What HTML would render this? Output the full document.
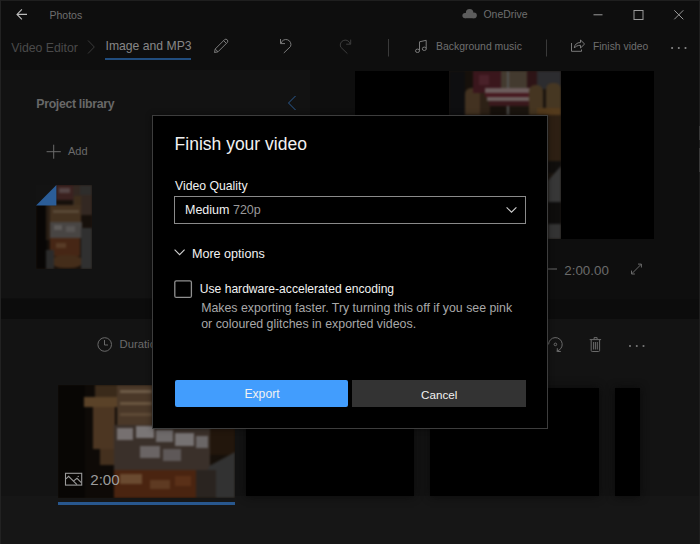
<!DOCTYPE html>
<html><head><meta charset="utf-8">
<style>
*{margin:0;padding:0;box-sizing:border-box}
html,body{width:700px;height:544px;overflow:hidden;background:#0e0e0e;font-family:"Liberation Sans",sans-serif}
.a{position:absolute}
.t{position:absolute;white-space:nowrap;line-height:1}
svg{position:absolute;overflow:visible}
</style></head><body>
<!-- window borders -->
<div class="a" style="left:0;top:0;width:700px;height:1px;background:#1f1f1f"></div>
<div class="a" style="left:0;top:0;width:1px;height:544px;background:#222"></div>
<div class="a" style="left:699px;top:0;width:1px;height:544px;background:#1e1e1e"></div>

<div class="a" style="left:699px;top:126px;width:1px;height:14px;background:#3a3a3a"></div>
<div class="a" style="left:699px;top:148px;width:1px;height:24px;background:#3a3a3a"></div>
<!-- title bar -->
<svg style="left:0;top:0" width="700" height="30">
  <g stroke="#bdbdbd" stroke-width="1.1" fill="none">
    <path d="M17.3 14.4H27 M21.9 9.4L17 14.4L21.9 19.4"/>
  </g>
  <g stroke="#9a9a9a" stroke-width="1" fill="none">
    <path d="M593.5 14.8H602.5"/>
    <rect x="634" y="10.5" width="9" height="9"/>
    <path d="M674.3 10.3L683.3 19.3M683.3 10.3L674.3 19.3"/>
  </g>
  <g fill="#5c5c5c"><circle cx="465" cy="15.6" r="2.6"/><circle cx="469.6" cy="12.9" r="3.8"/><circle cx="474" cy="15.4" r="2.8"/><rect x="465" y="13" width="9" height="5.2"/></g>
</svg>
<div class="t" style="left:49.5px;top:9.5px;font-size:10.5px;color:#6e6e6e">Photos</div>
<div class="t" style="left:483.5px;top:9.8px;font-size:10.45px;color:#6e6e6e">OneDrive</div>

<!-- toolbar -->
<div class="t" style="left:11.2px;top:41.6px;font-size:12.3px;color:#4a4a4a">Video Editor</div>
<svg style="left:0;top:30" width="700" height="34">
  <path d="M88 10.5L94.3 17L88 23.5" stroke="#3a3a3a" stroke-width="1" fill="none"/>
</svg>
<div class="t" style="left:105.5px;top:40.3px;font-size:12.2px;color:#878787">Image and MP3</div>
<div class="a" style="left:105px;top:58px;width:86px;height:2px;background:#214d7e"></div>
<svg style="left:0;top:0" width="700" height="64">
  <g stroke="#7a7a7a" stroke-width="1" fill="none">
    <!-- pencil -->
    <path d="M214.5 52.5L215.2 49L224.6 39.6A2 2 0 0 1 227.4 42.4L218 51.8Z M215.2 49L218 51.8 M223.6 40.6L226.4 43.4"/>
    <!-- undo -->
    <path d="M280.5 39V43.6H285 M281 43.6A5 5 0 1 1 290.5 46.5L283.8 53"/>
  </g>
  <g stroke="#3d3d3d" stroke-width="1" fill="none">
    <!-- redo -->
    <path d="M350.7 39.6V44.2H346.2 M350.2 44.2A5 5 0 1 0 340.7 47.1L347.4 53.6"/>
  </g>
  <rect x="388" y="39" width="1" height="17.5" fill="#3a3a3a"/>
  <rect x="546" y="39.5" width="1" height="17" fill="#3a3a3a"/>
  <g stroke="#7a7a7a" stroke-width="1" fill="none">
    <!-- music -->
    <path d="M419.5 50.5V41.8L426.2 40.3V48.6"/>
    <ellipse cx="417.5" cy="50.8" rx="2" ry="1.7"/>
    <ellipse cx="424.3" cy="48.8" rx="2" ry="1.7"/>
    <!-- share -->
    <path d="M571.5 43V51.3H581.5V49.5"/>
    <path d="M574.3 48C574.5 44.5 577 42.5 580.5 42.5V40L584.6 44L580.5 48V45.3C577.5 45.3 575.5 46.5 574.3 48Z"/>
  </g>
  <g fill="#8a8a8a">
    <circle cx="672.1" cy="48" r="1.05"/><circle cx="678.8" cy="48" r="1.05"/><circle cx="685.5" cy="48" r="1.05"/>
  </g>
</svg>
<div class="t" style="left:436px;top:41.5px;font-size:10.45px;color:#6e6e6e">Background music</div>
<div class="t" style="left:593px;top:41.9px;font-size:10.35px;color:#6e6e6e">Finish video</div>

<!-- left panel -->
<div class="a" style="left:1px;top:70px;width:308.5px;height:228px;background:#121212"></div>
<div class="t" style="left:36.3px;top:98px;font-size:12.3px;letter-spacing:-0.32px;color:#686868;font-weight:bold">Project library</div>
<svg style="left:0;top:0" width="320" height="300">
  <path d="M295.5 96L288.5 103L295.5 110" stroke="#2b5c94" stroke-width="1" fill="none"/>
  <path d="M53.7 144.7V158.7M46.6 151.7H60.8" stroke="#6a6a6a" stroke-width="1" fill="none"/>
</svg>
<div class="t" style="left:68px;top:146px;font-size:11px;color:#6a6a6a">Add</div>
<!-- thumbnail -->
<div class="a" id="thumb" style="left:36px;top:185px;width:56px;height:84px;background:#1c140e;overflow:hidden">
  <div style="position:absolute;left:-4px;top:-4px;width:64px;height:92px;filter:blur(0.9px) brightness(0.8)">
<div class="a" style="left:4px;top:4px;width:11px;height:84px;background:#0a0806;"></div>
<div class="a" style="left:15px;top:4px;width:45px;height:84px;background:#1c140e;"></div>
<div class="a" style="left:14px;top:14px;width:6px;height:45px;background:#34261a;"></div>
<div class="a" style="left:24px;top:4px;width:17px;height:15px;background:#4a2a28;"></div>
<div class="a" style="left:27px;top:7px;width:11px;height:5px;background:#6a5656;"></div>
<div class="a" style="left:41px;top:4px;width:19px;height:30px;background:#40322a;"></div>
<div class="a" style="left:48px;top:4px;width:12px;height:10px;background:#3a3836;"></div>
<div class="a" style="left:42px;top:15px;width:7px;height:36px;background:#4e3a24;"></div>
<div class="a" style="left:18px;top:24px;width:31px;height:17px;background:#553e28;"></div>
<div class="a" style="left:21px;top:29px;width:26px;height:3px;background:#6e5a44;"></div>
<div class="a" style="left:18px;top:41px;width:32px;height:16px;background:#5a5654;"></div>
<div class="a" style="left:22px;top:44px;width:8px;height:5px;background:#767270;"></div>
<div class="a" style="left:34px;top:45px;width:9px;height:6px;background:#6e6a68;"></div>
<div class="a" style="left:18px;top:57px;width:30px;height:18px;background:#58301a;"></div>
<div class="a" style="left:24px;top:62px;width:10px;height:5px;background:#6e4a30;"></div>
<div class="a" style="left:20px;top:74px;width:30px;height:13px;background:#553820;border-radius:40%"></div>
<div class="a" style="left:49px;top:47px;width:11px;height:41px;background:#3c3c3c;"></div>
<div class="a" style="left:14px;top:69px;width:8px;height:19px;background:#363636;"></div>
  </div>
</div>
<svg style="left:0;top:0" width="100" height="300">
  <path d="M36 185H56.4L36 205.6Z" fill="#131313"/>
  <path d="M56.4 185V205.6H36Z" fill="#2b5d98"/>
</svg>

<!-- preview -->
<div class="a" style="left:355px;top:71px;width:299px;height:168px;background:#000"></div>
<div class="a" id="prev" style="left:449px;top:71px;width:112px;height:168px;background:#1a140e;overflow:hidden">
  <div style="position:absolute;left:-4px;top:-4px;width:120px;height:176px;filter:blur(1px) brightness(0.78)">
<div class="a" style="left:4px;top:4px;width:16px;height:168px;background:#121214;"></div>
<div class="a" style="left:20px;top:4px;width:40px;height:168px;background:#1c140e;"></div>
<div class="a" style="left:20px;top:21px;width:15px;height:60px;background:#56402a;border-radius:6px 6px 0 0"></div>
<div class="a" style="left:35px;top:24px;width:10px;height:60px;background:#3a2a1c;"></div>
<div class="a" style="left:28px;top:4px;width:28px;height:22px;background:#4a1c24;"></div>
<div class="a" style="left:34px;top:8px;width:10px;height:10px;background:#5e2a34;"></div>
<div class="a" style="left:56px;top:4px;width:26px;height:18px;background:#564a3c;"></div>
<div class="a" style="left:62px;top:4px;width:2px;height:60px;background:#6a6a6a;"></div>
<div class="a" style="left:82px;top:4px;width:10px;height:20px;background:#3a1a1c;"></div>
<div class="a" style="left:92px;top:4px;width:24px;height:18px;background:#38383c;"></div>
<div class="a" style="left:40px;top:21px;width:46px;height:5px;background:#8a7676;"></div>
<div class="a" style="left:40px;top:26px;width:46px;height:4px;background:#5a2028;"></div>
<div class="a" style="left:42px;top:30px;width:44px;height:4px;background:#8a7a78;"></div>
<div class="a" style="left:44px;top:34px;width:40px;height:5px;background:#4a2024;"></div>
<div class="a" style="left:84px;top:18px;width:14px;height:40px;background:#58442a;border-radius:6px 6px 0 0"></div>
<div class="a" style="left:101px;top:16px;width:15px;height:42px;background:#5a462c;border-radius:6px 6px 0 0"></div>
<div class="a" style="left:92px;top:41px;width:24px;height:8px;background:#6a4a24;"></div>
<div class="a" style="left:20px;top:48px;width:96px;height:20px;background:#2a1e14;"></div>
<div class="a" style="left:103px;top:48px;width:13px;height:46px;background:#3a2818;"></div>
<div class="a" style="left:103px;top:94px;width:13px;height:12px;background:#141210;"></div>
<div class="a" style="left:103px;top:99px;width:13px;height:36px;background:#464646;clip-path:polygon(100% 0,100% 100%,0 100%,0 40%)"></div>
<div class="a" style="left:103px;top:135px;width:13px;height:22px;background:#121110;"></div>
<div class="a" style="left:103px;top:157px;width:13px;height:15px;background:#424242;"></div>
  </div>
</div>
<div class="a" style="left:547px;top:268px;width:10px;height:2px;background:#3a3a3a"></div>
<div class="t" style="left:564.3px;top:263.8px;font-size:13.35px;color:#6a6a6a">2:00.00</div>
<svg style="left:0;top:0" width="700" height="300">
  <path d="M631.5 274L641.4 264.1M631.5 274V270.6M631.5 274H634.9M641.4 264.1H638M641.4 264.1V267.5" stroke="#6a6a6a" stroke-width="1" fill="none"/>
</svg>

<!-- band -->
<div class="a" style="left:1px;top:299px;width:698px;height:20px;background:#0c0c0c"></div>
<!-- storyboard -->
<div class="a" style="left:1px;top:319px;width:698px;height:225px;background:#131313"></div>
<div class="a" style="left:1px;top:496px;width:698px;height:48px;background:#161616"></div>
<svg style="left:0;top:0" width="700" height="544">
  <circle cx="104.7" cy="344.5" r="6.8" stroke="#6a6a6a" stroke-width="1" fill="none"/>
  <path d="M104.5 340V345H108" stroke="#6a6a6a" stroke-width="1" fill="none"/>
  <!-- rotate -->
  <path d="M548.6 344.4A6.8 6.8 0 1 1 556.6 351.1 M557.3 348.2V351.5H560.8" stroke="#6a6a6a" stroke-width="1" fill="none"/>
  <circle cx="555.4" cy="344.4" r="1.3" stroke="#6a6a6a" stroke-width="1" fill="none"/>
  <!-- trash -->
  <path d="M589.7 339.6H601.1 M594.1 339.6V337.6H597.1V339.6 M591.2 339.6V350.5Q591.2 351.5 592.2 351.5H598.6Q599.6 351.5 599.6 350.5V339.6 M593.6 342V349.5M595.4 342V349.5M597.3 342V349.5" stroke="#6a6a6a" stroke-width="1" fill="none"/>
  <g fill="#7a7a7a"><circle cx="630" cy="346" r="1.05"/><circle cx="636.8" cy="346" r="1.05"/><circle cx="643.5" cy="346" r="1.05"/></g>
</svg>
<div class="t" style="left:119.5px;top:339.3px;font-size:11.3px;color:#6a6a6a">Duration</div>

<div class="a" id="card1" style="left:58px;top:385px;width:177px;height:113px;background:#16100a;overflow:hidden">
  <div style="position:absolute;left:-4px;top:-4px;width:185px;height:121px;filter:blur(1px)">
<div class="a" style="left:4px;top:4px;width:27px;height:113px;background:#080604;"></div>
<div class="a" style="left:31px;top:4px;width:35px;height:113px;background:#0e0a07;"></div>
<div class="a" style="left:41px;top:4px;width:22px;height:12px;background:#3a2a1a;"></div>
<div class="a" style="left:30px;top:16px;width:38px;height:10px;background:#5a4228;"></div>
<div class="a" style="left:39px;top:26px;width:22px;height:42px;background:#4c3622;"></div>
<div class="a" style="left:46px;top:68px;width:15px;height:16px;background:#44301e;"></div>
<div class="a" style="left:63px;top:4px;width:36px;height:40px;background:#4a3828;"></div>
<div class="a" style="left:66px;top:9px;width:32px;height:3px;background:#6e5c48;"></div>
<div class="a" style="left:66px;top:21px;width:32px;height:3px;background:#6a5640;"></div>
<div class="a" style="left:66px;top:32px;width:32px;height:3px;background:#5e4a36;"></div>
<div class="a" style="left:60px;top:44px;width:96px;height:45px;background:#3a302a;"></div>
<div class="a" style="left:63px;top:47px;width:16px;height:12px;background:#767070;"></div>
<div class="a" style="left:82px;top:45px;width:18px;height:12px;background:#7a7676;"></div>
<div class="a" style="left:102px;top:49px;width:17px;height:12px;background:#6e6a6a;"></div>
<div class="a" style="left:121px;top:52px;width:19px;height:13px;background:#767272;"></div>
<div class="a" style="left:142px;top:55px;width:12px;height:12px;background:#6a6666;"></div>
<div class="a" style="left:86px;top:65px;width:20px;height:12px;background:#6a6464;"></div>
<div class="a" style="left:109px;top:68px;width:18px;height:12px;background:#5e5858;"></div>
<div class="a" style="left:60px;top:89px;width:82px;height:28px;background:#4a2410;"></div>
<div class="a" style="left:66px;top:93px;width:22px;height:10px;background:#6a4a30;"></div>
<div class="a" style="left:96px;top:99px;width:20px;height:9px;background:#5e3a22;"></div>
<div class="a" style="left:121px;top:95px;width:16px;height:10px;background:#5a3018;"></div>
<div class="a" style="left:156px;top:44px;width:25px;height:30px;background:#22160c;"></div>
<div class="a" style="left:142px;top:71px;width:39px;height:46px;background:#323232;clip-path:polygon(100% 0,100% 100%,0 100%,35% 30%)"></div>
<div class="a" style="left:142px;top:89px;width:20px;height:28px;background:#2a2420;"></div>
  </div>
</div>
<svg style="left:0;top:0" width="300" height="544">
  <rect x="65.5" y="473.3" width="16.2" height="11.8" stroke="#9a9a9a" stroke-width="1.1" fill="none"/>
  <path d="M66 478.9L68.6 476.3L77 484.7 M73.4 481.1L77 478.3L81.3 482.6" stroke="#9a9a9a" stroke-width="1.1" fill="none"/>
  <circle cx="78.2" cy="476.4" r="0.7" fill="#9a9a9a"/>
</svg>
<div class="t" style="left:90.2px;top:472.2px;font-size:15.2px;color:#9c9c9c">2:00</div>
<div class="a" style="left:58px;top:502px;width:177px;height:3px;background:#28578e"></div>
<div class="a" style="left:246px;top:388px;width:168px;height:108px;background:#000;box-shadow:0 0 8px #0a0a0a"></div>
<div class="a" style="left:430px;top:388px;width:169px;height:108px;background:#000;box-shadow:0 0 8px #0a0a0a"></div>
<div class="a" style="left:615px;top:388px;width:25px;height:108px;background:#000;box-shadow:0 0 8px #0a0a0a"></div>

<!-- dialog -->
<div class="a" style="left:152px;top:115px;width:396px;height:314px;background:#000;border:1px solid rgba(255,255,255,0.24);box-shadow:0 0 6px rgba(0,0,0,0.45)"></div>
<div class="t" style="left:174.6px;top:136.3px;font-size:17.5px;color:#f2f2f2">Finish your video</div>
<div class="t" style="left:175.1px;top:180px;font-size:12.23px;color:#f2f2f2">Video Quality</div>
<div class="a" style="left:174px;top:196px;width:352px;height:28px;border:1px solid #8a8a8a"></div>
<div class="t" style="left:185px;top:203.6px;font-size:12.5px;color:#f2f2f2">Medium <span style="color:#9a9a9a">720p</span></div>
<svg style="left:0;top:0" width="700" height="544">
  <path d="M506.6 207.3L511.5 212.2L516.4 207.3" stroke="#d0d0d0" stroke-width="1.1" fill="none"/>
  <path d="M174.6 249.6L179.6 254.6L184.6 249.6" stroke="#d0d0d0" stroke-width="1.1" fill="none"/>
  <rect x="174.8" y="280.8" width="16.6" height="16.6" rx="1.5" stroke="#909090" stroke-width="1.3" fill="none"/>
</svg>
<div class="t" style="left:191.9px;top:247.9px;font-size:12.6px;color:#f2f2f2">More options</div>
<div class="t" style="left:199.8px;top:283.1px;font-size:12.1px;color:#f2f2f2">Use hardware-accelerated encoding</div>
<div class="t" style="left:201.2px;top:301.6px;font-size:12.33px;color:#a8a8a8">Makes exporting faster. Try turning this off if you see pink</div>
<div class="t" style="left:201.2px;top:317.6px;font-size:12.4px;color:#a8a8a8">or coloured glitches in exported videos.</div>
<div class="a" style="left:174.5px;top:379.6px;width:173.5px;height:27.8px;background:#429dfd;border-radius:2px"></div>
<div class="t" style="left:244.4px;top:388.3px;font-size:12.2px;color:#f2f2f2">Export</div>
<div class="a" style="left:352px;top:379.6px;width:174px;height:27.8px;background:#333333"></div>
<div class="t" style="left:421.1px;top:388.8px;font-size:11.65px;color:#f2f2f2">Cancel</div>
</body></html>
